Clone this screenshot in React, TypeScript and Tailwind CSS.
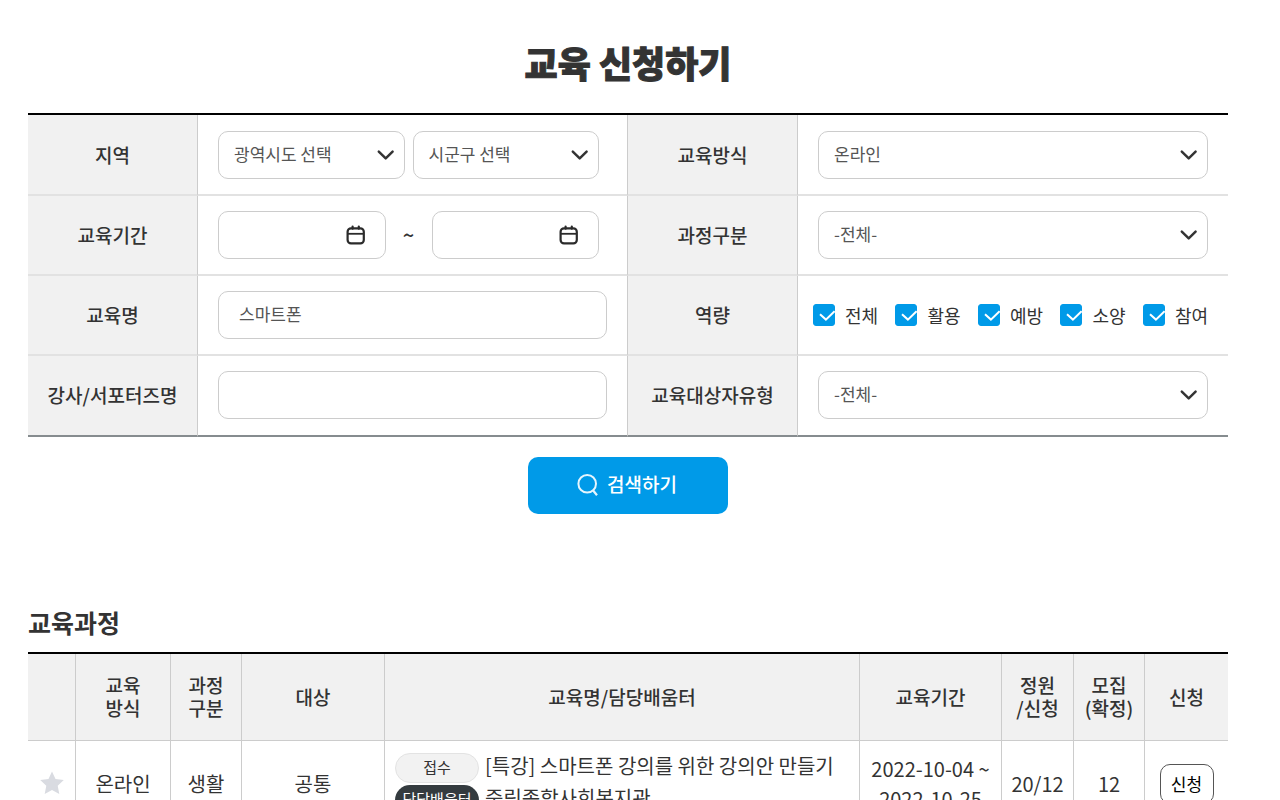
import type { ReactNode } from "react";

function SelectBox({ label, options }: { label: string; options: string[] }) {
  return (
    <div className="relative min-w-0 flex-1">
      <select
        aria-label={label}
        className="block h-12 w-full appearance-none rounded-[10px] border border-[#ccc] bg-white pr-10 pb-0.5 pl-[15px] text-[17px] text-[#555]"
      >
        {options.map((option) => (
          <option key={option}>{option}</option>
        ))}
      </select>
      <svg
        viewBox="0 0 18 18"
        className="pointer-events-none absolute top-[15px] right-[10px] size-[18px]"
        fill="none"
        stroke="#333"
        strokeWidth="2.5"
        strokeLinecap="round"
        strokeLinejoin="round"
      >
        <path d="M1.800 5.700 8.700 12.400 15.600 5.700" />
      </svg>
    </div>
  );
}

function DateBox({ label }: { label: string }) {
  return (
    <div className="flex h-12 min-w-0 flex-1 items-center rounded-[10px] border border-[#ccc] bg-white pr-[19px] pl-[15px]">
      <input type="text" aria-label={label} className="min-w-0 flex-1 text-[17px] text-[#555] outline-none" />
      <button type="button" aria-label={`${label} 선택`} className="shrink-0">
        <svg viewBox="0 0 20 20" className="block size-5" fill="none" stroke="#2b2b2b">
          <rect x="1.600" y="3.400" width="16.200" height="15" rx="3.400" strokeWidth="2.200" />
          <path d="M2 8.800h15.500" strokeWidth="1.800" />
          <path d="M6.600 1.500v2.200M12.800 1.500v2.200" strokeWidth="2.200" strokeLinecap="round" />
        </svg>
      </button>
    </div>
  );
}

function TextBox({ id, value }: { id: string; value?: string }) {
  return (
    <input
      id={id}
      type="text"
      defaultValue={value}
      className="block h-12 w-full rounded-[10px] border border-[#ccc] bg-white px-5 pb-1 text-[17px] text-[#555]"
    />
  );
}

function CheckItem({ label }: { label: string }) {
  return (
    <label className="flex items-center gap-[10px] text-[18px] whitespace-nowrap text-[#333]">
      <span className="relative block size-[22px] shrink-0">
        <input
          type="checkbox"
          defaultChecked
          className="peer block size-[22px] appearance-none rounded-[3px] border border-[#ccc] bg-white checked:border-[#009ae8] checked:bg-[#009ae8]"
        />
        <svg
          viewBox="0 0 22 22"
          className="pointer-events-none absolute inset-0 hidden size-[22px] peer-checked:block"
          fill="none"
          stroke="#fff"
          strokeWidth="2"
        >
          <path d="M7 10.300 12.900 15.600 21.600 7.200" />
        </svg>
      </span>
      {label}
    </label>
  );
}

function SearchRow({
  left,
  leftField,
  right,
  rightField,
  tone,
}: {
  left: ReactNode;
  leftField: ReactNode;
  right: ReactNode;
  rightField: ReactNode;
  tone: string;
}) {
  return (
    <tr>
      <th scope="row" className={`border-r border-b-2 border-r-[#ccc] bg-[#f1f1f1] font-medium ${tone}`}>
        {left}
      </th>
      <td className={`border-r border-b-2 border-r-[#ccc] px-5 ${tone}`}>{leftField}</td>
      <th scope="row" className={`border-r border-b-2 border-r-[#ccc] bg-[#f1f1f1] font-medium ${tone}`}>
        {right}
      </th>
      <td className={`border-b-2 px-5 ${tone}`}>{rightField}</td>
    </tr>
  );
}

function HeadCell({ children, last }: { children?: ReactNode; last?: boolean }) {
  return (
    <th
      scope="col"
      className={`h-[87px] border-b border-[#ccc] pb-0.5 font-medium ${last ? "" : "border-r"}`}
    >
      {children}
    </th>
  );
}

const midRow = "h-20 border-b-[#e2e2e2]";
const firstRow = "h-[81px] pt-px border-b-[#e2e2e2]";
const lastRow = "h-[81px] pb-px border-b-[#868c8f]";
const skills = ["전체", "활용", "예방", "소양", "참여"];

export default function App() {
  return (
    <main className="min-h-screen bg-white pr-6 font-['Noto_Sans_CJK_KR',sans-serif] text-[#333]">
      <div className="mx-auto w-full max-w-[1200px] pt-9">
        <h1 className="text-center text-[36px] leading-[53px] font-black [-webkit-text-stroke:1px_#333]">
          교육 신청하기
        </h1>

        <form className="mt-6" onSubmit={(e) => e.preventDefault()}>
          <table className="w-full table-fixed border-separate border-spacing-0 border-t-2 border-black text-[19px]">
            <colgroup>
              <col className="w-[170px]" />
              <col />
              <col className="w-[170px]" />
              <col />
            </colgroup>
            <tbody>
              <SearchRow
                tone={firstRow}
                left="지역"
                leftField={
                  <div className="flex gap-2 pr-2">
                    <SelectBox label="광역시도" options={["광역시도 선택"]} />
                    <SelectBox label="시군구" options={["시군구 선택"]} />
                  </div>
                }
                right="교육방식"
                rightField={<SelectBox label="교육방식" options={["온라인"]} />}
              />
              <SearchRow
                tone={midRow}
                left="교육기간"
                leftField={
                  <div className="flex items-center pr-2">
                    <DateBox label="시작일" />
                    <span className="w-[46px] text-center text-[20px] font-medium">~</span>
                    <DateBox label="종료일" />
                  </div>
                }
                right="과정구분"
                rightField={<SelectBox label="과정구분" options={["-전체-"]} />}
              />
              <SearchRow
                tone={midRow}
                left={<label htmlFor="course">교육명</label>}
                leftField={<TextBox id="course" value="스마트폰" />}
                right="역량"
                rightField={
                  <div className="-ml-[5px] flex justify-between">
                    {skills.map((skill) => (
                      <CheckItem key={skill} label={skill} />
                    ))}
                  </div>
                }
              />
              <SearchRow
                tone={lastRow}
                left={<label htmlFor="teacher">강사/서포터즈명</label>}
                leftField={<TextBox id="teacher" />}
                right="교육대상자유형"
                rightField={<SelectBox label="교육대상자유형" options={["-전체-"]} />}
              />
            </tbody>
          </table>

          <button
            type="submit"
            className="mx-auto mt-5 flex h-[57px] w-[200px] items-center justify-center gap-2 rounded-[10px] bg-[#009ae8] pr-0.5 pb-0.5 text-[19px] font-medium text-white"
          >
            <svg viewBox="0 0 22 24" className="h-6 w-[22px]" fill="none" stroke="#e6f5fd" strokeWidth="2">
              <circle cx="10.200" cy="10.700" r="8.800" />
              <path d="M15.700 17 20 22.200" strokeWidth="2.200" />
            </svg>
            검색하기
          </button>
        </form>

        <section className="mt-[89px]">
          <h2 className="text-[25px] leading-[38px] font-bold">교육과정</h2>
          <table className="mt-[11px] w-full table-fixed border-separate border-spacing-0 border-t-2 border-black text-center text-[20px]">
            <colgroup>
              <col className="w-12" />
              <col className="w-[95px]" />
              <col className="w-[71px]" />
              <col className="w-[143px]" />
              <col />
              <col className="w-[142px]" />
              <col className="w-[72px]" />
              <col className="w-[71px]" />
              <col className="w-[83px]" />
            </colgroup>
            <thead className="bg-[#f1f1f1] text-[19px] leading-[23px]">
              <tr>
                <HeadCell />
                <HeadCell>교육<br />방식</HeadCell>
                <HeadCell>과정<br />구분</HeadCell>
                <HeadCell>대상</HeadCell>
                <HeadCell>교육명/담당배움터</HeadCell>
                <HeadCell>교육기간</HeadCell>
                <HeadCell>정원<br />/신청</HeadCell>
                <HeadCell>모집<br />(확정)</HeadCell>
                <HeadCell last>신청</HeadCell>
              </tr>
            </thead>
            <tbody className="leading-[30px] [&_td]:border-b [&_td]:border-[#ccc] [&_td:not(:last-child)]:border-r">
              <tr>
                <td className="h-[87px] pb-2">
                  <button type="button" aria-label="관심 교육" className="align-middle">
                    <svg viewBox="0 0 24 24" className="block size-6" fill="#d9dbe1">
                      <path d="m12 .5 3.500 7.600 8.300 1-6.100 5.700 1.600 8.200-7.300-4.100L4.700 23l1.600-8.200L.2 9.100l8.300-1z" />
                    </svg>
                  </button>
                </td>
                <td>온라인</td>
                <td>생활</td>
                <td>공통</td>
                <td className="px-[10px] text-left">
                  <div className="flex flex-col gap-0.5">
                    <div className="flex items-start gap-1.5">
                      <span className="h-[30px] w-[84px] shrink-0 rounded-full border border-[#e3e3e3] bg-[#f2f2f2] text-center text-[15px] leading-[26px]">
                        접수
                      </span>
                      <a href="#course" className="leading-[26px] whitespace-nowrap">
                        [특강] 스마트폰 강의를 위한 강의안 만들기
                      </a>
                    </div>
                    <div className="flex items-start gap-1.5">
                      <span className="h-[30px] w-[84px] shrink-0 rounded-full bg-[#343b3f] text-center text-[15px] leading-7 text-white">
                        담당배움터
                      </span>
                      <span className="leading-[26px]">중림종합사회복지관</span>
                    </div>
                  </div>
                </td>
                <td>2022-10-04 ~<br />2022-10-25</td>
                <td>20/12</td>
                <td>12</td>
                <td>
                  <button
                    type="button"
                    className="h-10 w-[54px] rounded-[10px] border border-[#555] bg-white align-middle text-[17px] leading-9 text-black"
                  >
                    신청
                  </button>
                </td>
              </tr>
            </tbody>
          </table>
        </section>
      </div>
    </main>
  );
}
